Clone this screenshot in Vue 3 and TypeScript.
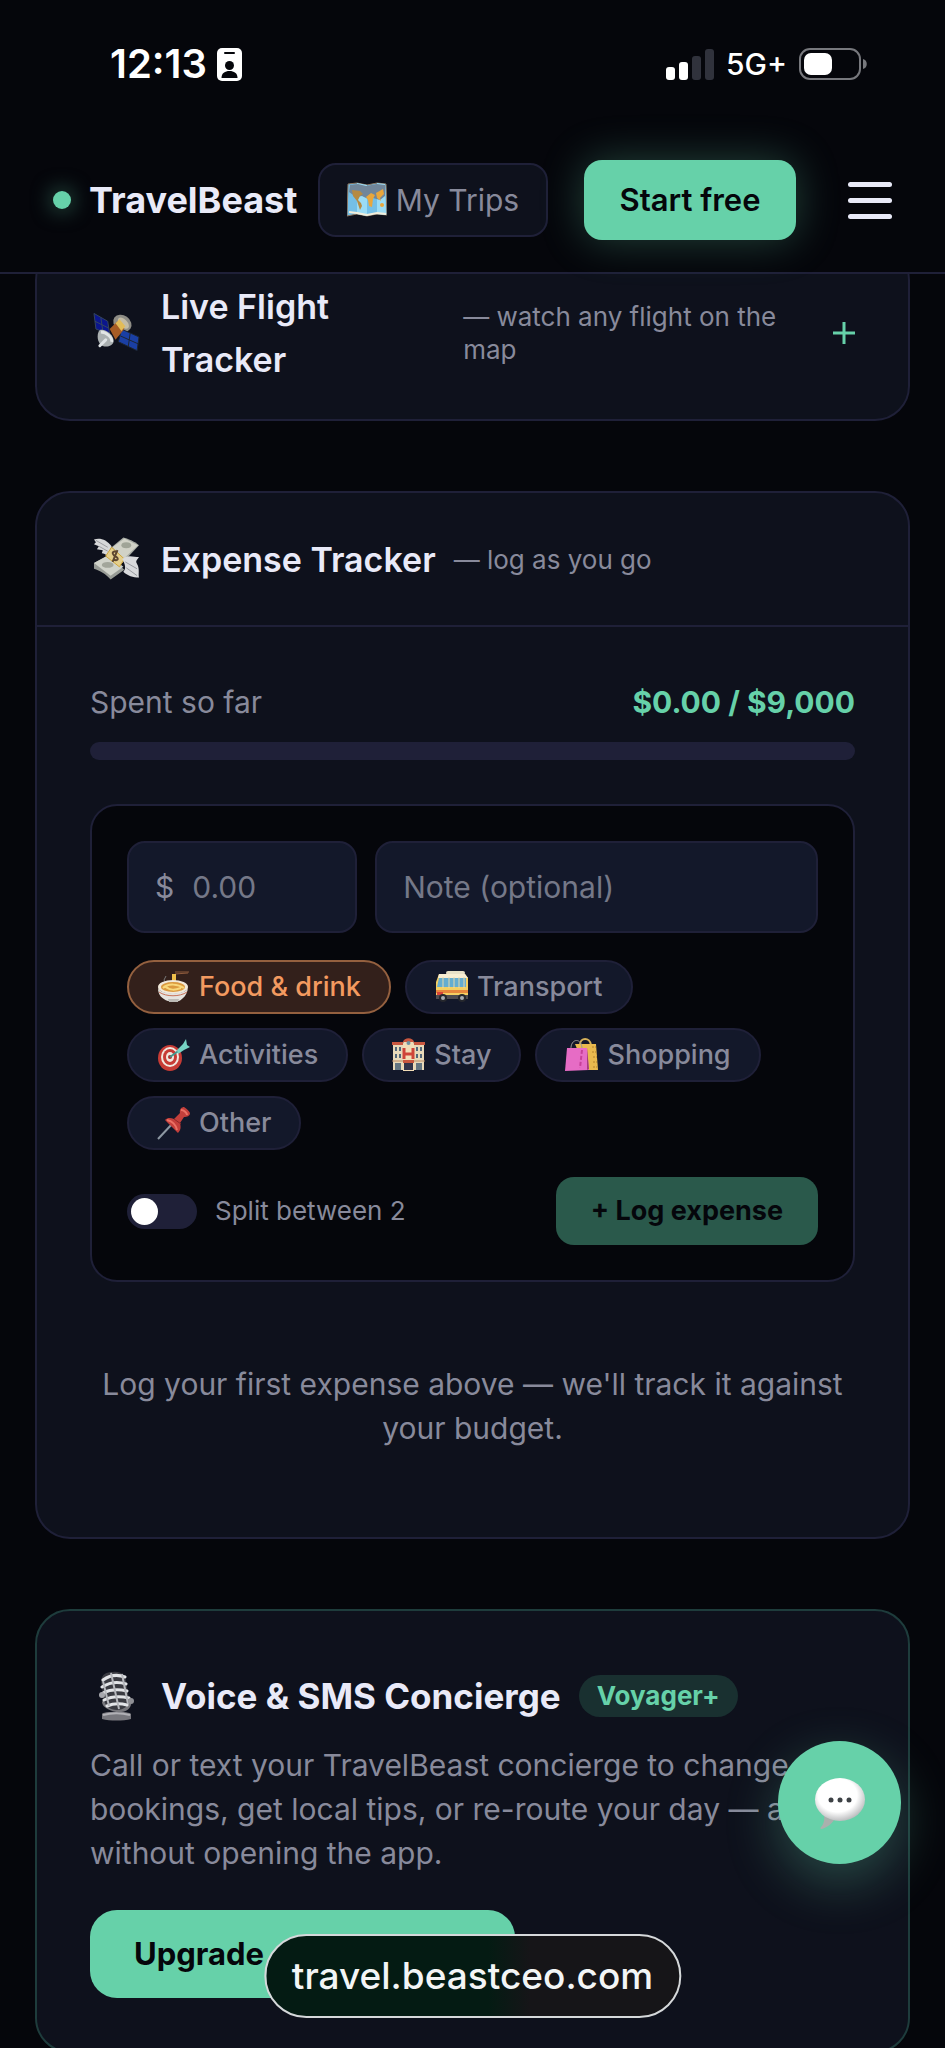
<script setup lang="ts">
import { ref } from 'vue'

interface Category {
  id: string
  label: string
}

const categories: Category[] = [
  { id: 'food', label: 'Food & drink' },
  { id: 'transport', label: 'Transport' },
  { id: 'activities', label: 'Activities' },
  { id: 'stay', label: 'Stay' },
  { id: 'shopping', label: 'Shopping' },
  { id: 'other', label: 'Other' },
]

const selected = ref('food')
const amount = ref('')
const note = ref('')
const split = ref(false)
const spent = ref(0)
const budget = 9000
</script>

<template>
  <div class="screen">
    <header class="top">
      <div class="status">
        <span class="time">12:13</span>
        <svg class="badge-icon" viewBox="0 0 25 33" aria-hidden="true">
          <rect width="25" height="33" rx="5" fill="#fff" />
          <rect x="7" y="4" width="11" height="2" rx="1" fill="#05060b" />
          <circle cx="12.500" cy="17.500" r="4.500" fill="#05060b" />
          <path d="M4.500 30c0-5 3.500-7 8-7s8 2 8 7z" fill="#05060b" />
        </svg>
        <div class="status-right">
          <svg class="signal" viewBox="0 0 48 31" aria-hidden="true">
            <rect x="0" y="18" width="9" height="13" rx="3" fill="#fff" />
            <rect x="13" y="13" width="9" height="18" rx="3" fill="#fff" />
            <rect x="26" y="7" width="9" height="24" rx="3" fill="#30323c" />
            <rect x="39" y="0" width="9" height="31" rx="3" fill="#30323c" />
          </svg>
          <span class="network">5G+</span>
          <svg class="battery" viewBox="0 0 68 32" aria-hidden="true">
            <rect x="1" y="1" width="60" height="30" rx="10" fill="none" stroke="#77787d" stroke-width="2" />
            <rect x="5" y="5" width="28" height="22" rx="7" fill="#fff" />
            <path d="M64 11c5 1 5 9 0 10z" fill="#77787d" />
          </svg>
        </div>
      </div>
      <nav class="nav">
        <a class="brand" href="#"><span class="dot"></span>TravelBeast</a>
        <a class="trips" href="#">
          <svg class="map" viewBox="0 0 40 36" aria-hidden="true">
            <path d="M1 2l9-1 10 2 10-2 9 1 1 31-10-1-10 2-10-2-10 2z" fill="#74bfe6" stroke="#8b7560" stroke-width="1" />
            <path d="M10 1v31l10 2V3zM30 1v31l9 1L38 2z" fill="#9bdcf5" />
            <path d="M3 3l8-1 8 2 11-2 8 1v11l-5 4-7-2-5 1-6-3-6 1-7-5z" fill="#71869a" />
            <path d="M5 8l8 1 3 3-3 2-2 4 3 3 1 3-2 4-3-9-4-5z" fill="#b58a42" />
            <path d="M19 15l5-4 4 2-2 4-1 8-3-1-1-6zM29 11l7-4 1 5-4 4 1 3-4-3z" fill="#e9a73c" />
            <circle cx="35" cy="23" r="2" fill="#e9a73c" />
            <path d="M2 30l8 1 10 2 10-2 9 1" fill="none" stroke="#f2eedb" stroke-width="2" />
          </svg>
          My Trips
        </a>
        <button class="start" type="button">Start free</button>
        <button class="menu" type="button" aria-label="Menu"><i></i><i></i><i></i></button>
      </nav>
    </header>

    <main class="content">
      <section class="card">
        <button class="card-head" type="button">
          <svg class="emoji" viewBox="0 0 48 48" aria-hidden="true">
            <ellipse cx="30" cy="14" rx="10" ry="8" fill="#8e8d86" transform="rotate(35 30 14)" />
            <ellipse cx="31" cy="14" rx="7" ry="4" fill="#c3bca6" transform="rotate(45 31 14)" />
            <path d="M1 4l14 8 2 13L3 20z" fill="#0b168d" />
            <path d="M1 4l14 8 2 13L3 20zM8 8l2 14M2 12l14 7" fill="none" stroke="#34465f" stroke-width="1" />
            <path d="M29 20l18 8-2 14-19-9z" fill="#1a3fa4" />
            <path d="M29 20l18 8-2 14-19-9zM38 24l-2 14M28 27l18 8" fill="none" stroke="#1d2530" stroke-width="1" />
            <path d="M17 20l8-8 7 8-9 11z" fill="#a65c24" />
            <path d="M23 14l4-4 6 7-4 5z" fill="#e2bc58" />
            <path d="M7 21c5-2 15 5 14 12-1 5-10 7-14 2-3-4-3-11 0-14z" fill="#aab0b1" />
            <path d="M8 23c6 0 12 6 11 10" fill="none" stroke="#e1e5e5" stroke-width="3" />
            <path d="M13 31l-6 6" stroke="#dfe4e6" stroke-width="3" stroke-linecap="round" />
          </svg>
          <span class="title">Live Flight Tracker</span>
          <span class="sub">— watch any flight on the map</span>
          <svg class="plus" viewBox="0 0 22 22" aria-hidden="true">
            <path d="M11 0v22M0 11h22" stroke="#66d1a9" stroke-width="3" />
          </svg>
        </button>
      </section>

      <section class="card">
        <button class="card-head open" type="button">
          <svg class="emoji" viewBox="0 0 48 48" aria-hidden="true">
            <path d="M1 4c6-2 13 0 18 7l-4 10c-2-2-4-3-6-3l1-3-6-1 2-3-5-2 2-2z" fill="#d7d8d9" />
            <path d="M3 5l12 7M6 11l9 5" stroke="#9c9da0" stroke-width="1" />
            <path d="M19 12L31 2c4 1 12 4 16 8L30 28z" fill="#a6aaa3" />
            <path d="M20 12L32 3l14 7-15 14z" fill="#d1d2c7" />
            <ellipse cx="34" cy="10" rx="5" ry="3" fill="#a0a497" />
            <path d="M1 28l15-8 16 15-14 10C13 39 7 36 1 34z" fill="#989c96" />
            <path d="M1 28l15-8 15 12-13 9z" fill="#d0d3ca" />
            <ellipse cx="15" cy="30" rx="6" ry="3" fill="#a2a69b" />
            <path d="M19 12l13 12-5 8-14-11z" fill="#e4cf8d" stroke="#d0a538" stroke-width="1" />
            <path d="M24 16c-7 0-3 5 0 6 3 2 0 5-3 2M25 15l-5 12" fill="none" stroke="#5d4630" stroke-width="2" />
            <path d="M30 24c5-5 12-2 17-2-2 3-4 4-2 7 3 5 1 10 2 14-6 0-12-2-16-6 3-3 2-7-1-13z" fill="#d9dadc" />
            <path d="M33 27l12 7M34 33l11 8" stroke="#97999e" stroke-width="1" />
          </svg>
          <span class="title">Expense Tracker</span>
          <span class="sub">— log as you go</span>
        </button>

        <div class="body">
          <div class="spent">
            <span>Spent so far</span>
            <strong>${{ spent.toFixed(2) }} / ${{ budget.toLocaleString('en-US') }}</strong>
          </div>
          <div class="bar"><div class="fill" :style="{ width: (spent / budget) * 100 + '%' }"></div></div>

          <form class="entry" @submit.prevent>
            <div class="fields">
              <label class="field">
                <span>$</span>
                <input v-model="amount" type="text" inputmode="decimal" placeholder="0.00" aria-label="Amount" />
              </label>
              <label class="field">
                <input v-model="note" type="text" placeholder="Note (optional)" aria-label="Note" />
              </label>
            </div>

            <div class="chips">
              <button
                v-for="c in categories"
                :key="c.id"
                type="button"
                class="chip"
                :class="{ active: selected === c.id }"
                :aria-pressed="selected === c.id"
                @click="selected = c.id"
              >
                <svg class="chip-icon" viewBox="0 0 33 34" aria-hidden="true">
                  <g v-if="c.id === 'food'">
                    <path d="M18 2l14 0M18 4l13-1" stroke="#8e5a3c" stroke-width="1" />
                    <path d="M15 4h4v14h-4z" fill="#efbf4b" />
                    <path d="M9 6l-2 4 2 4" fill="none" stroke="#777" stroke-width="1" />
                    <ellipse cx="16" cy="17" rx="15" ry="7" fill="#f1e8d9" />
                    <ellipse cx="16" cy="17" rx="12" ry="5" fill="#db9a3f" />
                    <path d="M6 18c5-5 15-4 21 0M8 16c5 5 10 4 16 2" fill="none" stroke="#f8d87b" stroke-width="2" />
                    <path d="M1 18c2 7 28 7 30 0-1 7-5 11-9 13H11C5 29 1 25 1 18z" fill="#e5e3df" />
                    <path d="M2 22c7 5 21 5 28 0" fill="none" stroke="#c87259" stroke-width="1" />
                    <path d="M11 29h11l-1 3h-9z" fill="#bcbab5" />
                  </g>
                  <g v-else-if="c.id === 'transport'">
                    <rect x="11" y="1" width="19" height="4" rx="2" fill="#e8e1c7" />
                    <path d="M4 4h26l3 4v21H1V12z" fill="#f5cf62" />
                    <path d="M4 4h26l3 4H3z" fill="#f8eed3" />
                    <path d="M4 8h27v9H2z" fill="#65add0" />
                    <path d="M8 7v11M14 7v11M19 7v11M24 7v11M29 7v11" stroke="#e8d9aa" stroke-width="1" />
                    <path d="M1 20h32v3H1z" fill="#e7873d" />
                    <path d="M1 25h32v4H1z" fill="#4f4c50" />
                    <rect x="2" y="22" width="6" height="3" fill="#d7453a" />
                    <circle cx="8" cy="28" r="4" fill="#25272d" />
                    <circle cx="8" cy="28" r="2" fill="#a8adb2" />
                    <circle cx="27" cy="28" r="4" fill="#25272d" />
                    <circle cx="27" cy="28" r="2" fill="#a8adb2" />
                  </g>
                  <g v-else-if="c.id === 'activities'">
                    <ellipse cx="13" cy="20" rx="12" ry="13" fill="#c73b35" />
                    <ellipse cx="13" cy="19" rx="9" ry="10" fill="#f1e8df" />
                    <ellipse cx="13" cy="19" rx="7" ry="8" fill="#c73b35" />
                    <ellipse cx="13" cy="19" rx="4" ry="5" fill="#f1e8df" />
                    <circle cx="13" cy="19" r="2" fill="#b52f2c" />
                    <path d="M13 19L27 9" stroke="#44978e" stroke-width="2" />
                    <path d="M20 12l6-6 3-5 1 6 3 2-6 3-6 4z" fill="#76d3c3" />
                  </g>
                  <g v-else-if="c.id === 'stay'">
                    <path d="M11 6c0-6 11-6 11 0v27H11z" fill="#f2ddb6" />
                    <path d="M1 6h10v26H1zM22 6h10v26H22z" fill="#e8d9b9" />
                    <path d="M0 4h11v3H0zM22 4h11v3H22zM11 4c1-5 10-5 11 0" fill="#c9573f" />
                    <circle cx="16.500" cy="5" r="2" fill="#6c94a2" />
                    <path d="M12 10v11M21 10v11M12 16h9" stroke="#cf4438" stroke-width="3" />
                    <path d="M3 9h2v4H3zM7 9h2v4H7zM3 16h2v4H3zM7 16h2v4H7zM24 9h2v4h-2zM28 9h2v4h-2zM24 16h2v4h-2zM28 16h2v4h-2z" fill="#52677a" />
                    <path d="M12 24h9v8h-9z" fill="#33344a" />
                    <path d="M11 22h11v3H11z" fill="#c9573f" />
                    <path d="M3 25h6v7H3zM24 25h6v7h-6z" fill="#647682" />
                    <path d="M0 23h11M22 23h11" stroke="#bc8b65" stroke-width="1" />
                  </g>
                  <g v-else-if="c.id === 'shopping'">
                    <path d="M15 7c0-8 10-8 11 0" fill="none" stroke="#d4b05a" stroke-width="2" />
                    <path d="M10 6h21l2 26H21z" fill="#e9b94e" />
                    <path d="M27 9h4M27 14h4M28 19h4M28 24h4M28 29h4" stroke="#b4822d" stroke-width="1" stroke-dasharray="2 1" />
                    <path d="M6 12C5 0 17-1 17 11" fill="none" stroke="#9a9795" stroke-width="1" />
                    <path d="M2 10h20l2 22-24 1z" fill="#e66cc5" />
                    <path d="M22 10l2 21-2 1z" fill="#a53d7f" />
                    <path d="M17 12l-2 18" stroke="#c74199" stroke-width="2" stroke-dasharray="4 2" />
                  </g>
                  <g v-else>
                    <path d="M1 33l15-16" stroke="#8d98a3" stroke-width="2" />
                    <path d="M8 14c3-3 6-2 9-1l6-6c-1-4 2-6 4-6 3 2 5 4 6 6 0 3-3 4-6 4l-4 6c1 4 1 7-2 10z" fill="#c43f3b" />
                    <path d="M24 4c3 0 6 3 6 5M10 14c5 1 9 5 10 10" fill="none" stroke="#eb7165" stroke-width="2" />
                    <path d="M17 13l7 5" stroke="#8f2828" stroke-width="1" />
                  </g>
                </svg>
                {{ c.label }}
              </button>
            </div>

            <div class="actions">
              <label class="split"><input v-model="split" type="checkbox" role="switch" />Split between 2</label>
              <button class="log" type="submit" disabled>+ Log expense</button>
            </div>
          </form>

          <p class="empty">Log your first expense above — we'll track it against your budget.</p>
        </div>
      </section>

      <section class="card concierge">
        <div class="concierge-head">
          <svg class="mic" viewBox="0 0 53 50" aria-hidden="true">
            <path d="M12 43c0-3 28-3 29 0v5c-8 2-21 2-29 0z" fill="#77777d" />
            <path d="M13 44c8-2 19-2 27 0" fill="none" stroke="#b1b1b6" stroke-width="2" />
            <path d="M12 31c0 9 25 16 29 3l1-6-7-3-20 1z" fill="#77777c" />
            <path d="M11 10C12 3 16 1 23 1c8-1 12 3 13 9l3 18c0 7-5 11-12 11s-12-4-13-10z" fill="#3a3b42" />
            <path d="M13 9c7-5 14-6 22-3M12 16c8-5 15-6 24-3M13 22c8-4 15-4 24-2M14 29c8-4 16-4 25-2M17 35c7-3 13-3 20-1" fill="none" stroke="#e2e4e7" stroke-width="3" stroke-linecap="round" />
            <path d="M21 2l8 36M13 10l6 25M32 3l6 30" fill="none" stroke="#b6b8bd" stroke-width="2" />
            <circle cx="12" cy="24" r="3" fill="#a6a7ad" />
            <circle cx="41" cy="30" r="3" fill="#8e8f94" />
          </svg>
          <h2>Voice &amp; SMS Concierge</h2>
          <span class="tag">Voyager+</span>
        </div>
        <p>Call or text your TravelBeast concierge to change bookings, get local tips, or re-route your day — all without opening the app.</p>
        <button class="upgrade" type="button">Upgrade</button>
      </section>
    </main>

    <button class="chat" type="button" aria-label="Open chat">
      <svg viewBox="0 0 52 52" aria-hidden="true">
        <defs>
          <radialGradient id="bubble" cx="45%" cy="40%" r="60%">
            <stop offset="65%" stop-color="#fff" />
            <stop offset="100%" stop-color="#bdbec0" />
          </radialGradient>
        </defs>
        <path d="M10 38h12c-1 6-7 12-14 14-2 0-2-1-1-2 2-2 4-6 3-12z" fill="#a9b0ad" />
        <ellipse cx="26" cy="22.500" rx="25" ry="21.500" fill="url(#bubble)" />
        <g fill="#3d4145"><circle cx="17" cy="23" r="2.500" /><circle cx="26" cy="23" r="2.500" /><circle cx="35" cy="23" r="2.500" /></g>
      </svg>
    </button>
    <div class="address">travel.beastceo.com</div>
  </div>
</template>

<style>
body {
  margin: 0;
  background: #05060b;
}
</style>

<style scoped>
* {
  box-sizing: border-box;
}

.screen {
  position: relative;
  height: 100vh;
  overflow: hidden;
  background: #05060b;
  color: #e9eaf8;
  font-family: Inter, "Liberation Sans", sans-serif;
  font-size: 30px;
  line-height: 44px;
}

button,
input {
  font: inherit;
  color: inherit;
  margin: 0;
  padding: 0;
  border: 0;
  background: none;
}

button {
  cursor: pointer;
}

a {
  color: inherit;
  text-decoration: none;
}

svg {
  display: block;
  flex: none;
}

.top {
  position: absolute;
  inset: 0 0 auto;
  z-index: 2;
  background: #05060b;
  border-bottom: 2px solid #1f2038;
}

.status {
  display: flex;
  align-items: center;
  height: 128px;
  padding: 0 78px 0 110px;
  color: #fff;
}

.time {
  font-size: 40px;
  font-weight: 600;
}

.badge-icon {
  width: 25px;
  height: 33px;
  margin-left: 10px;
}

.status-right {
  display: flex;
  align-items: center;
  gap: 12px;
  margin-left: auto;
}

.signal {
  width: 48px;
  height: 31px;
}

.network {
  font-size: 30px;
  font-weight: 500;
}

.battery {
  width: 68px;
  height: 32px;
}

.nav {
  display: flex;
  align-items: center;
  height: 144px;
  padding: 0 53px;
}

.brand {
  display: flex;
  align-items: center;
  gap: 18px;
  margin-right: auto;
  font-size: 36px;
  font-weight: 700;
}

.dot {
  width: 18px;
  height: 18px;
  border-radius: 50%;
  background: #66d1a9;
  box-shadow: 0 0 22px rgba(102, 209, 169, 0.6);
}

.trips {
  display: flex;
  align-items: center;
  justify-content: center;
  gap: 9px;
  width: 230px;
  height: 74px;
  border: 2px solid #1f2038;
  border-radius: 18px;
  background: #0e111c;
  color: #888a9b;
  white-space: nowrap;
}

.map {
  width: 40px;
  height: 36px;
}

.start {
  width: 212px;
  height: 80px;
  margin: 0 52px 0 36px;
  border-radius: 18px;
  background: #66d1a9;
  box-shadow: 0 0 44px rgba(102, 209, 169, 0.3);
  color: #05060b;
  font-size: 31px;
  font-weight: 600;
}

.menu {
  display: flex;
  flex-direction: column;
  gap: 11px;
  width: 44px;
}

.menu i {
  height: 5px;
  border-radius: 3px;
  background: #e9eaf8;
}

.content {
  display: flex;
  flex-direction: column;
  gap: 70px;
  padding: 245px 35px 70px;
}

.card {
  border: 2px solid #1f2038;
  border-radius: 35px;
  background: #0e111c;
}

.card-head {
  display: flex;
  align-items: center;
  gap: 18px;
  width: 100%;
  padding: 33px 53px;
  text-align: left;
}

.card-head.open {
  border-bottom: 2px solid #1f2038;
}

.emoji {
  width: 53px;
  height: 66px;
  padding: 0 3px;
}

.title {
  font-size: 34px;
  line-height: 53px;
  font-weight: 600;
}

.sub {
  color: #888a9b;
  font-size: 26px;
  line-height: 33px;
}

.plus {
  width: 22px;
  height: 22px;
  margin-left: auto;
}

.body {
  padding: 53px 53px 87px;
}

.spent {
  display: flex;
  justify-content: space-between;
  color: #888a9b;
}

.spent strong {
  color: #66d1a9;
  font-weight: 700;
}

.bar {
  height: 18px;
  margin: 18px 0 44px;
  border-radius: 9px;
  background: #1f2038;
}

.fill {
  height: 100%;
  border-radius: 9px;
  background: #66d1a9;
}

.entry {
  display: flex;
  flex-direction: column;
  gap: 27px;
  padding: 35px;
  border: 2px solid #1f2038;
  border-radius: 27px;
  background: #05060b;
}

.fields {
  display: grid;
  grid-template-columns: 13fr 25fr;
  gap: 18px;
}

.field {
  display: flex;
  align-items: center;
  gap: 18px;
  min-width: 0;
  height: 92px;
  padding: 0 26px;
  border: 2px solid #1f2038;
  border-radius: 18px;
  background: #13182a;
  color: #888a9b;
}

.field input {
  width: 100%;
  min-width: 0;
  outline: 0;
}

.field input::placeholder {
  color: #757888;
  opacity: 1;
}

.chips {
  display: flex;
  flex-wrap: wrap;
  gap: 14px;
}

.chip {
  display: flex;
  align-items: center;
  gap: 9px;
  height: 54px;
  padding: 0 28px;
  border: 2px solid #1f2038;
  border-radius: 27px;
  background: #13182a;
  color: #888a9b;
  font-size: 27px;
  font-weight: 500;
}

.chip.active {
  border-color: #94603f;
  background: #33201b;
  color: #f39a60;
}

.chip-icon {
  width: 33px;
  height: 34px;
}

.actions {
  display: flex;
  align-items: center;
  justify-content: space-between;
}

.split {
  display: flex;
  align-items: center;
  gap: 18px;
  color: #888a9b;
  font-size: 26px;
}

.split input {
  appearance: none;
  width: 70px;
  height: 35px;
  padding: 4px;
  border-radius: 18px;
  background: #1f2038;
}

.split input::before {
  content: "";
  display: block;
  width: 27px;
  height: 27px;
  border-radius: 50%;
  background: #fff;
}

.split input:checked {
  background: #66d1a9;
}

.split input:checked::before {
  margin-left: auto;
}

.log {
  height: 68px;
  padding: 0 35px;
  border-radius: 18px;
  background: #2a594b;
  color: #05060b;
  font-size: 27px;
  font-weight: 700;
}

.empty {
  margin: 80px 0 0;
  color: #888a9b;
  text-align: center;
}

.concierge {
  padding: 53px;
  border-color: #1e3c3c;
}

.concierge-head {
  display: flex;
  align-items: center;
  gap: 18px;
  height: 64px;
}

.mic {
  width: 53px;
  height: 50px;
}

.concierge h2 {
  margin: 0;
  font-size: 35px;
  font-weight: 700;
}

.tag {
  padding: 0 18px;
  border-radius: 21px;
  background: #193030;
  color: #66d1a9;
  font-size: 26px;
  line-height: 42px;
  font-weight: 700;
}

.concierge p {
  margin: 15px 0 35px;
  color: #888a9b;
}

.upgrade {
  width: 425px;
  height: 88px;
  padding: 0 44px;
  border-radius: 27px;
  background: #66d1a9;
  color: #05060b;
  font-size: 31px;
  font-weight: 700;
  text-align: left;
}

.chat {
  position: absolute;
  right: 44px;
  bottom: 184px;
  display: grid;
  place-items: center;
  width: 123px;
  height: 123px;
  border-radius: 50%;
  background: #66d1a9;
  box-shadow: 0 18px 53px rgba(102, 209, 169, 0.3);
}

.chat svg {
  width: 52px;
  height: 52px;
}

.address {
  position: absolute;
  bottom: 30px;
  left: 50%;
  padding: 0 26px;
  border: 2px solid #d5d8da;
  border-radius: 42px;
  background: linear-gradient(90deg, #041b13 54%, #161518 64%);
  color: #f3f5f6;
  font-size: 37px;
  font-weight: 500;
  line-height: 80px;
  transform: translateX(-50%);
}
</style>
